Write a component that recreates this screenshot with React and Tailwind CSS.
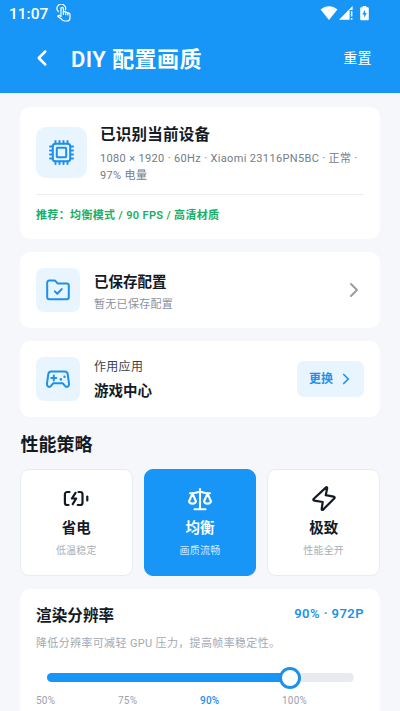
import React from "react";
import { TbChevronLeft, TbChevronRight } from "react-icons/tb";

// --- DATA: performance strategies ---
const strategies = [
  { id: "save", title: "省电", note: "低温稳定", icon: BatteryIcon },
  { id: "balanced", title: "均衡", note: "画质流畅", icon: ScaleIcon },
  { id: "max", title: "极致", note: "性能全开", icon: BoltIcon },
];

const resolutionStops = ["50%", "75%", "90%", "100%"];

// Shared frame for the line icons
function LineIcon({ width, children }) {
  return (
    <svg
      className="w-7 h-7 shrink-0"
      viewBox="0 0 28 28"
      fill="none"
      stroke="currentColor"
      strokeWidth={width}
      strokeLinecap="round"
      strokeLinejoin="round"
    >
      {children}
    </svg>
  );
}

function BatteryIcon() {
  return (
    <LineIcon width="2.2">
      <path d="M7.5 8H5.200a2.300 2.300 0 0 0-2.300 2.300v8.400A2.300 2.300 0 0 0 5.200 21H6.500" />
      <path d="M16.500 8h1.700a2.300 2.300 0 0 1 2.300 2.300v8.400a2.300 2.300 0 0 1-2.300 2.300h-2.500" />
      <path d="M13.500 8.800L9.900 14.500h4.300l-3.500 5.700" />
      <path d="M25.300 12.500v4" />
    </LineIcon>
  );
}

function ScaleIcon() {
  return (
    <LineIcon width="2.1">
      <path d="M14 5v20.200M8.500 25.200h11M4 9.200h3.500c2.500 0 4.500-1 6.500-1.600 2 .6 4 1.600 6.500 1.600H24" />
      <path d="M6.500 9.400L3 17.500c.4 1.300 1.700 2.100 3.500 2.100s3.100-.8 3.500-2.100z" />
      <path d="M21.500 9.400L18 17.500c.4 1.300 1.700 2.100 3.500 2.100s3.100-.8 3.500-2.100z" />
    </LineIcon>
  );
}

function BoltIcon() {
  return (
    <LineIcon width="2.2">
      <path d="M15.800 3.600L3.800 14.700c-.8.800-.5 1.700.6 1.900l8.300 1.400-1 7c-.1 1.100.7 1.300 1.400.6l11.100-11.100c.8-.8.500-1.700-.6-1.900L15.700 11.200l1.500-7c.1-1-.7-1.300-1.400-.6z" />
    </LineIcon>
  );
}

function ChipIcon() {
  return (
    <LineIcon width="2">
      <rect x="4.800" y="4.800" width="17.400" height="17.400" rx="2.500" />
      <rect x="8.800" y="8.800" width="9.400" height="9.400" rx="0.800" />
      <path d="M7.500 4.500V2M11.500 4.500V2M15.500 4.500V2M19.500 4.500V2M7.500 25v-2.500M11.500 25v-2.500M15.500 25v-2.500M19.500 25v-2.500" />
      <path d="M4.500 7.500H2M4.500 11.500H2M4.500 15.500H2M4.500 19.500H2M25 7.500h-2.500M25 11.500h-2.500M25 15.500h-2.500M25 19.500h-2.500" />
    </LineIcon>
  );
}

function FolderIcon() {
  return (
    <LineIcon width="2">
      <path d="M5.200 4.500h5.300c.5 0 .8.200 1.100.6l1.900 2.300h9.300a2 2 0 0 1 2 2v11.800a2 2 0 0 1-2 2H5.200a2 2 0 0 1-2-2V6.500a2 2 0 0 1 2-2z" />
      <path d="M10.800 15.400l2.500 2.400 4.400-4.700" />
    </LineIcon>
  );
}

function GamepadIcon() {
  return (
    <LineIcon width="2">
      <path d="M7.300 6.400h13.400a3 3 0 0 1 3 2.700l1.300 9.600c.4 3-2.300 4.200-4.100 2.100l-2-2.500H9.100l-2 2.500c-1.800 2.100-4.500.9-4.100-2.100l1.300-9.600a3 3 0 0 1 3-2.700z" />
      <path d="M9.800 10.400v5M7.300 12.900h5" />
      <path d="M16.900 14.300v.1M20.500 11.700v.1" strokeWidth="2.500" />
    </LineIcon>
  );
}

function StatusBar() {
  return (
    <div className="h-7 flex items-center justify-between pl-[9px] pr-[30px]">
      <div className="flex items-center gap-[8px]">
        <span className="text-[15.5px] leading-7 font-medium">11:07</span>
        {/* Tap gesture */}
        <svg
          className="w-4 h-[18px] -mt-[2px]"
          viewBox="0 0 16 18"
          fill="none"
          stroke="currentColor"
          strokeWidth="1.2"
          strokeLinecap="round"
          strokeLinejoin="round"
        >
          <path d="M2.300 7.500A4.300 4.300 0 1 1 9.300 6" />
          <path d="M5 11.500V4.600a1.200 1.200 0 0 1 2.400 0v4.200l.4-1c.8-.5 1.600-.2 2 .6.8-.5 1.700-.1 2 .7 1-.4 2.200.2 2.200 1.400v3.200c0 2-1.400 3.300-3.400 3.300H9c-1.200 0-2-.4-2.800-1.200L1.800 12.200c.8-1.200 2-1 3.200.4" />
          <path d="M7.400 8.800v1.700M9.800 8.600v2M11.900 9.300v1.700" />
        </svg>
      </div>
      <div className="flex items-center -mt-[2px]">
        <svg className="w-[18px] h-4" viewBox="0 0 18 16" fill="currentColor">
          <path d="M9 15L.6 4.600C3 2.300 6 1.200 9 1.200s6 1.100 8.400 3.400z" />
        </svg>
        <svg className="w-[16px] h-4" viewBox="0 0 16 16" fill="currentColor">
          <path d="M1 14.700L14.600 1v4h-3v9.700z" />
          <path d="M12.900 6.200h1.500v5.300h-1.500zM12.900 13h1.500v1.700h-1.500z" />
        </svg>
        <svg className="ml-[5px] w-[11px] h-4" viewBox="0 0 11 16" fill="currentColor">
          <path
            fillRule="evenodd"
            d="M3.700 1h3.600v1.200h1.500a1 1 0 0 1 1 1v11a1 1 0 0 1-1 1H2.200a1 1 0 0 1-1-1v-11a1 1 0 0 1 1-1h1.500zM6 4.800L3.300 9.500h1.900v3.300L7.800 8H6z"
          />
        </svg>
      </div>
    </div>
  );
}

function Header() {
  return (
    <header className="h-[93px] bg-[#1796f7] text-white">
      <StatusBar />
      <div className="h-[60px] pl-[29px] pr-7 flex items-center">
        <TbChevronLeft className="w-[26px] h-[26px]" strokeWidth={2.3} />
        <h1 className="ml-4 mt-[2px] text-[22px] font-semibold tracking-[0.45px]">DIY 配置画质</h1>
        <button className="ml-auto text-[14px] tracking-[0.4px]">重置</button>
      </div>
    </header>
  );
}

function DeviceCard() {
  return (
    <section className="h-[132px] bg-white rounded-[10px] px-4 pt-[18px]">
      <div className="flex h-[69px]">
        <div className="mt-[2px] w-[51px] h-[51px] shrink-0 rounded-[10px] bg-[#e8f5ff] text-[#1c91ec] flex items-center justify-center">
          <ChipIcon />
        </div>
        <div className="ml-[13px] pt-px">
          <h2 className="text-[15.5px] leading-[19px] font-bold tracking-[0.25px]">已识别当前设备</h2>
          <p className="mt-[5px] text-[11px] leading-[17px] tracking-[0.35px] text-[#727c8a] whitespace-nowrap">
            1080 × 1920 · 60Hz · Xiaomi 23116PN5BC · 正常 ·
            <br />
            97% 电量
          </p>
        </div>
      </div>
      <div className="border-t border-[#ebeef2] pt-[12px]">
        <p className="text-[11px] leading-[17px] font-semibold tracking-[0.35px] text-[#19ad65]">
          推荐：均衡模式 / 90 FPS / 高清材质
        </p>
      </div>
    </section>
  );
}

function SavedCard() {
  return (
    <section className="mt-[13px] h-[76px] bg-white rounded-[10px] px-4 flex items-center">
      <div className="w-11 h-11 shrink-0 rounded-lg bg-[#e8f5ff] text-[#1c91ec] flex items-center justify-center">
        <FolderIcon />
      </div>
      <div className="ml-[14px] pt-[5px]">
        <h2 className="text-[14.500px] leading-5 font-bold">已保存配置</h2>
        <p className="mt-[4px] text-[11px] leading-4 tracking-[0.3px] text-[#8a929e]">暂无已保存配置</p>
      </div>
      <TbChevronRight className="ml-auto -mr-[2px] w-6 h-6 text-[#979da5]" strokeWidth={2} />
    </section>
  );
}

function AppCard() {
  return (
    <section className="mt-[13px] h-[76px] bg-white rounded-[10px] px-4 flex items-center">
      <div className="w-11 h-11 shrink-0 rounded-lg bg-[#e8f5ff] text-[#1c91ec] flex items-center justify-center">
        <GamepadIcon />
      </div>
      <div className="ml-[14px] pt-[2px]">
        <p className="text-[12px] leading-[18px] tracking-[0.3px] text-[#3c434d]">作用应用</p>
        <h2 className="mt-[6px] text-[14.500px] leading-5 font-bold">游戏中心</h2>
      </div>
      <button className="ml-auto w-[67px] h-9 rounded-[7px] bg-[#e8f5ff] text-[#1c91ec] flex items-center pl-[12px] gap-[4px]">
        <span className="text-[12px] font-bold">更换</span>
        <TbChevronRight className="w-[18px] h-[18px]" strokeWidth={2.300} />
      </button>
    </section>
  );
}

function StrategyCard({ item, active }) {
  const Icon = item.icon;
  return (
    <button
      className={
        active
          ? "h-[107px] rounded-[9px] border border-[#1796f7] bg-[#1796f7] text-white flex flex-col items-center pt-[14px]"
          : "h-[107px] rounded-[9px] border border-[#e8ebf1] bg-white text-[#131a25] flex flex-col items-center pt-[14px]"
      }
    >
      <Icon />
      <span className="mt-[7px] text-[14.500px] leading-5 font-bold">{item.title}</span>
      <span
        className={
          active
            ? "mt-[4px] text-[10px] leading-4 tracking-[0.2px] text-[#cfe9ff]"
            : "mt-[4px] text-[10px] leading-4 tracking-[0.2px] text-[#a9afb9]"
        }
      >
        {item.note}
      </span>
    </button>
  );
}

function ResolutionCard() {
  return (
    <section className="mt-[13px] h-[160px] bg-white rounded-[10px] px-4 pt-4">
      <div className="flex justify-between">
        <h2 className="text-[15.500px] leading-[23px] font-bold tracking-[0.15px]">渲染分辨率</h2>
        <span className="mt-px text-[13px] leading-4 font-semibold tracking-[0.450px] text-[#1c91ec]">90% · 972P</span>
      </div>
      <p className="mt-[8px] text-[11px] leading-4 tracking-[0.35px] text-[#a3a9b3]">
        降低分辨率可减轻 GPU 压力，提高帧率稳定性。
      </p>
      {/* Slider */}
      <div className="mt-[21px] mx-[10.500px] h-[9px] rounded-full bg-[#e7ebf0] relative">
        <div className="h-full w-[79.200%] rounded-full bg-[#1796f7]" />
        <div className="absolute top-1/2 left-[79.200%] w-[22px] h-[22px] -translate-x-1/2 -translate-y-1/2 rounded-full bg-white border-[3px] border-[#1c91ec]" />
      </div>
      <div className="mt-[10px] grid grid-cols-4 text-[10px] leading-[17px] tracking-[0.2px] text-[#9aa1ac]">
        {resolutionStops.map((stop) => (
          <span key={stop} className={stop === "90%" ? "text-[#1c91ec] font-medium" : ""}>
            {stop}
          </span>
        ))}
      </div>
    </section>
  );
}

const App = () => {
  return (
    <div className="w-full h-[711px] overflow-hidden bg-[#f5f7fb] text-[#131a25] font-[Roboto,'Noto_Sans_CJK_SC',sans-serif]">
      <Header />
      <main className="px-5 pt-[14px]">
        <DeviceCard />
        <SavedCard />
        <AppCard />
        <h2 className="mt-[15px] ml-[0.5px] text-[18px] leading-[26px] font-bold">性能策略</h2>
        <div className="mt-[11px] grid grid-cols-3 gap-[11px]">
          {strategies.map((item) => (
            <StrategyCard key={item.id} item={item} active={item.id === "balanced"} />
          ))}
        </div>
        <ResolutionCard />
      </main>
    </div>
  );
};

export default App;
